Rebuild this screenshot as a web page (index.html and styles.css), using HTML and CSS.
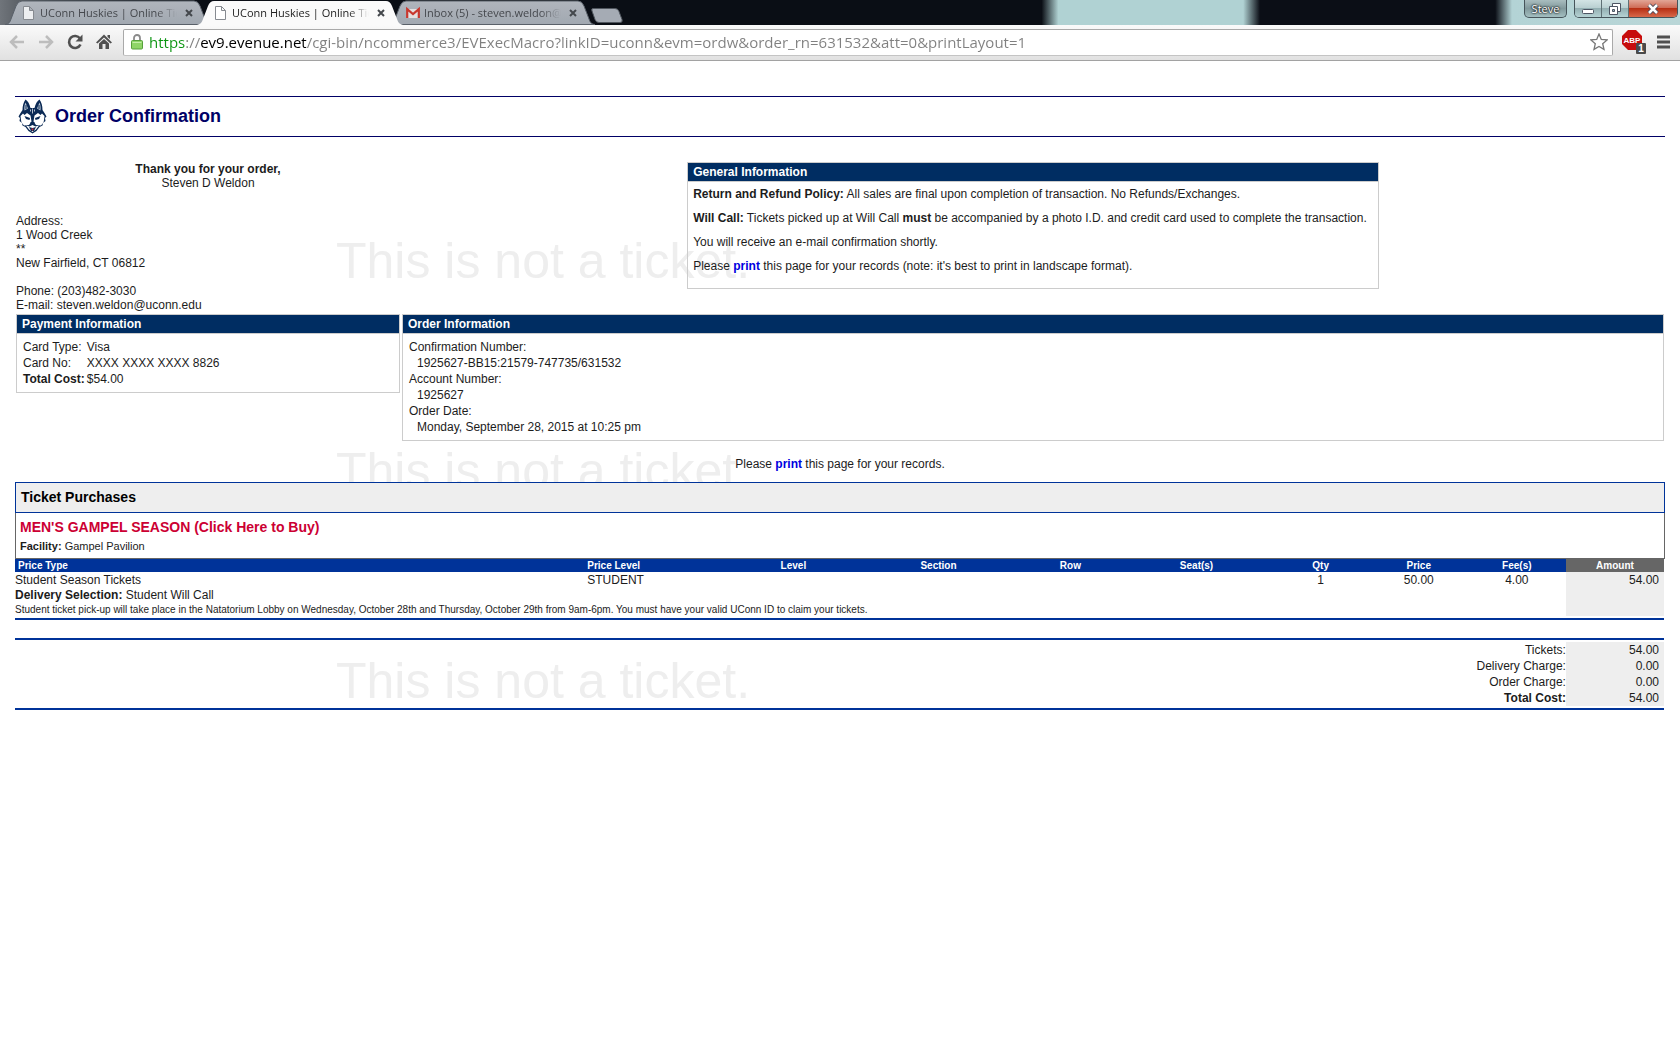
FILE: index.html
```html
<!DOCTYPE html>
<html lang="en">
<head>
<meta charset="utf-8">
<title>UConn Huskies | Online Ticket Office</title>
<link rel="stylesheet" href="styles.css">
</head>
<body>
<div class="browser">
  <div class="titlebar">
    <div class="tabs">
      <div class="tab">
        <svg class="tab-shape" viewBox="0 0 206 25" aria-hidden="true"><defs><linearGradient id="idle" x1="0" x2="0" y1="0" y2="1"><stop offset="0" stop-color="#b0b5bc"/><stop offset="1" stop-color="#a1a8b1"/></linearGradient></defs><path d="M0 24.5C4 24 5 22 6 19L11 6Q13 1 17 1H189Q193 1 195 6L200 19C201 22 202 24 206 24.5Z" fill="url(#idle)" stroke="#596069"/></svg>
        <svg class="tab-icon" viewBox="0 0 14 14" aria-hidden="true"><path d="M1.5.5h6l4 4v9h-10zM7.500.5v4h4" fill="#eceef0" stroke="#868a90"/></svg>
        <span class="tab-title">UConn Huskies | Online Ticket</span>
        <button class="tab-close" aria-label="Close tab"><svg viewBox="0 0 8 8"><path d="M1 1l6 6M7 1L1 7"/></svg></button>
      </div>
      <div class="tab tab-right">
        <svg class="tab-shape" viewBox="0 0 206 25" aria-hidden="true"><path d="M0 24.500C4 24 5 22 6 19L11 6Q13 1 17 1H189Q193 1 195 6L200 19C201 22 202 24 206 24.5Z" fill="url(#idle)" stroke="#596069"/></svg>
        <svg class="tab-icon" viewBox="0 0 14 14" aria-hidden="true"><path d="M1 3h12v9H1z" fill="#e4e0e0"/><path d="M1.200 12V3.200L7 8l5.800-4.800V12" fill="none" stroke="#c9372e" stroke-width="2.200"/></svg>
        <span class="tab-title">Inbox (5) - steven.weldon@uconn.edu</span>
        <button class="tab-close" aria-label="Close tab"><svg viewBox="0 0 8 8"><path d="M1 1l6 6M7 1L1 7"/></svg></button>
      </div>
      <div class="tab tab-active">
        <svg class="tab-shape" viewBox="0 0 206 25" aria-hidden="true"><path d="M0 25C4 24 5 22 6 19L11 6Q13 1 17 1H189Q193 1 195 6L200 19C201 22 202 24 206 25Z" fill="#fafafa"/></svg>
        <svg class="tab-icon" viewBox="0 0 14 14" aria-hidden="true"><path d="M1.500.5h6l4 4v9h-10zM7.500.5v4h4" fill="#fff" stroke="#868a90"/></svg>
        <span class="tab-title">UConn Huskies | Online Ticket</span>
        <button class="tab-close" aria-label="Close tab"><svg viewBox="0 0 8 8"><path d="M1 1l6 6M7 1L1 7"/></svg></button>
      </div>
      <button class="new-tab" aria-label="New tab"><svg viewBox="0 0 32 15"><path d="M2 .5h22q3 0 4 3l3 8q1 3-2 3H8q-3 0-4-3L1 3Q0 .5 2 .5z" fill="#a5abb4" stroke="#50565e"/></svg></button>
    </div>
    <div class="window-controls">
      <button class="profile">Steve</button>
      <div class="caption-buttons">
        <button class="caption minimize" aria-label="Minimize"><svg viewBox="0 0 14 12"><rect x="1.500" y="6.500" width="11" height="4" rx="1" fill="#fff" stroke="#4d5563"/></svg></button>
        <button class="caption restore" aria-label="Restore"><svg viewBox="0 0 14 12"><path d="M4.500.5h8v8h-8z" fill="#fff" stroke="#4d5563"/><path d="M1.500 3.500h8v8h-8z" fill="#fff" stroke="#4d5563"/><path d="M4.500 6.500h2v2h-2z" fill="#9dbcc0" stroke="#4d5563"/></svg></button>
        <button class="caption close" aria-label="Close"><svg viewBox="0 0 14 12"><path d="M3 2l8 8M11 2l-8 8" stroke="#4d4a5a" stroke-width="4.500"/><path d="M3 2l8 8M11 2l-8 8" stroke="#fff" stroke-width="2.500"/></svg></button>
      </div>
    </div>
  </div>
  <div class="toolbar">
    <button class="tool" aria-label="Back"><svg viewBox="0 0 16 16"><path d="M15 8H2M8 2L2 8l6 6" fill="none" stroke="#bdbdbd" stroke-width="2.500"/></svg></button>
    <button class="tool" aria-label="Forward"><svg viewBox="0 0 16 16"><path d="M1 8h13M8 2l6 6-6 6" fill="none" stroke="#bdbdbd" stroke-width="2.500"/></svg></button>
    <button class="tool" aria-label="Reload"><svg viewBox="0 0 16 16"><path d="M13 4.500A6 6 0 1 0 13.500 10.500" fill="none" stroke="#505050" stroke-width="2.600"/><path d="M15.500.5v7h-7z" fill="#505050"/></svg></button>
    <button class="tool" aria-label="Home"><svg viewBox="0 0 16 16"><path d="M8 .5L16 8.500l-1.500 1L8 3.500 1.500 9.500 0 8.500zM11.500 1h2.500v4l-2.500-2zM3 9.500l5-4.500 5 4.500V15H9.500v-5h-3v5H3z" fill="#505050"/></svg></button>
    <div class="omnibox">
      <svg class="lock" viewBox="0 0 12 16" aria-hidden="true"><path d="M3 7.500V4a3 3 0 0 1 6 0v3.500" fill="none" stroke="#8b8b8b" stroke-width="1.800"/><rect x=".5" y="6.500" width="11" height="8.500" rx="1" fill="#8fd568" stroke="#56a03c"/><path d="M1.500 8.500h9" stroke="#c4efa9"/></svg>
      <input class="url" type="text" aria-label="Address" value="https://ev9.evenue.net/cgi-bin/ncommerce3/EVExecMacro?linkID=uconn&amp;evm=ordw&amp;order_rn=631532&amp;att=0&amp;printLayout=1">
      <button class="star" aria-label="Bookmark this page"><svg viewBox="0 0 18 18"><path d="M9 1l2.300 5.400 5.800.5-4.400 3.800 1.300 5.700L9 13.400 4 16.400l1.300-5.700L.9 6.900l5.800-.5z" fill="#fff" stroke="#777" stroke-width="1.300"/></svg></button>
    </div>
    <button class="abp" aria-label="Adblock Plus"><svg viewBox="0 0 24 24"><path d="M6 0h8l6 6v8l-6 6H6l-6-6V6z" fill="#c70d0d"/><text x="10" y="13" text-anchor="middle" class="abp-label">ABP</text><rect x="14" y="13" width="10" height="11" rx="1" fill="#4a4a4a"/><text x="19" y="22" text-anchor="middle" class="abp-count">1</text></svg></button>
    <button class="menu" aria-label="Menu"><svg viewBox="0 0 14 14"><path d="M0 2h13M0 7h13M0 12h13" stroke="#505050" stroke-width="3"/></svg></button>
  </div>
</div>

<main class="page">
  <div class="watermark watermark-one" aria-hidden="true">This is not a ticket.</div>
  <div class="watermark watermark-two" aria-hidden="true">This is not a ticket.</div>
  <div class="watermark watermark-three" aria-hidden="true">This is not a ticket.</div>

  <header class="page-header">
    <svg class="logo" viewBox="0 0 35 35" role="img" aria-label="UConn Huskies">
      <path d="M10.500.5C13 2 14.500 5 15.500 9h4C20.500 5 22 2 24.500.5 26.500 3 27.500 7 27.500 11L29.500 14 31.500 17.500 30 19l.5 3-2.500 2-.5 2.500-3 1.500-3 4-4 2.500-4-2.500-3-4-3-1.500L7 24l-2.500-2L5 19l-1.500-1.500L5.500 14l2-3C7.500 7 8.500 3 10.500.5z" fill="#0b2a55"/>
      <path d="M10.500 3.500l2.500 6-3.500 2c-.5-3 0-6 1-8zM24.500 3.500l-2.500 6 3.500 2c.5-3 0-6-1-8z" fill="#b9c5d3"/>
      <path d="M11 6v4M24 6v4" stroke="#0b2a55"/>
      <path d="M17.500 9.500v5M15.500 10.500v2M19.500 10.500v2" stroke="#dfe5ec" stroke-width=".8"/>
      <path d="M5.500 17l2.500-2.500 1.500 1.500 2.500-2 3.500 2.500 1 6-2.500 3.500-5 .5-2.500-3L6 21z" fill="#fff"/>
      <path d="M29.500 17L27 14.500 25.500 16 23 14l-3.500 2.500-1 6L21 26l5 .5 2.500-3L29 21z" fill="#fff"/>
      <path d="M9.500 17l5.500 2-.5 2-3.500-1zM25.500 17L20 19l.5 2 3.500-1z" fill="#0b2a55"/>
      <path d="M15.500 23h4l-.5 3.500h-3z" fill="#0b2a55"/>
      <path d="M11 26.500l3.500 1 3-1.500 3 1.500 3.500-1-3 4-3.500 2.500-3.500-2.500z" fill="#fff"/>
      <path d="M14 28l3.500 1 3.500-1-2 4h-3z" fill="#0b2a55"/>
      <path d="M16.200 29.500h2.600l-1.300 2.500z" fill="#d22c3a"/>
    </svg>
    <h1>Order Confirmation</h1>
  </header>

  <div class="summary">
    <div class="customer">
      <p class="greeting"><strong>Thank you for your order,</strong><br>Steven D Weldon</p>
      <address>Address:<br>1 Wood Creek<br>**<br>New Fairfield, CT 06812<br><br>Phone: (203)482-3030<br>E-mail: steven.weldon@uconn.edu</address>
    </div>
    <section class="panel general">
      <h2>General Information</h2>
      <div class="general-body">
        <p><strong>Return and Refund Policy:</strong> All sales are final upon completion of transaction. No Refunds/Exchanges.</p>
        <p><strong>Will Call:</strong> Tickets picked up at Will Call <strong>must</strong> be accompanied by a photo I.D. and credit card used to complete the transaction.</p>
        <p>You will receive an e-mail confirmation shortly.</p>
        <p>Please <a href="#print">print</a> this page for your records (note: it's best to print in landscape format).</p>
      </div>
    </section>
    <section class="panel">
      <h2>Payment Information</h2>
      <dl class="payment">
        <dt>Card Type:</dt><dd>Visa</dd>
        <dt>Card No:</dt><dd>XXXX XXXX XXXX 8826</dd>
        <dt><strong>Total Cost:</strong></dt><dd>$54.00</dd>
      </dl>
    </section>
    <section class="panel">
      <h2>Order Information</h2>
      <dl class="order">
        <dt>Confirmation Number:</dt><dd>1925627-BB15:21579-747735/631532</dd>
        <dt>Account Number:</dt><dd>1925627</dd>
        <dt>Order Date:</dt><dd>Monday, September 28, 2015 at 10:25 pm</dd>
      </dl>
    </section>
  </div>

  <p class="print-note">Please <a href="#print">print</a> this page for your records.</p>

  <section class="purchases">
    <h2 class="purchases-title">Ticket Purchases</h2>
    <div class="event">
      <h3>MEN'S GAMPEL SEASON (Click Here to Buy)</h3>
      <p><strong>Facility:</strong> Gampel Pavilion</p>
    </div>
    <div class="ruled items">
      <table>
        <colgroup><col><col class="c-plevel"><col class="c-level"><col class="c-section"><col class="c-row"><col class="c-seat"><col class="c-num"><col class="c-num"><col class="c-num"><col class="c-num"></colgroup>
        <thead>
          <tr><th class="left first">Price Type</th><th class="left">Price Level</th><th>Level</th><th>Section</th><th>Row</th><th>Seat(s)</th><th>Qty</th><th>Price</th><th>Fee(s)</th><th class="amount-head">Amount</th></tr>
        </thead>
        <tbody>
          <tr class="item"><td class="left">Student Season Tickets</td><td class="left">STUDENT</td><td></td><td></td><td></td><td></td><td>1</td><td>50.00</td><td>4.00</td><td class="amount" rowspan="3">54.00</td></tr>
          <tr><td class="left" colspan="9"><strong>Delivery Selection:</strong> Student Will Call</td></tr>
          <tr><td class="left pickup" colspan="9">Student ticket pick-up will take place in the Natatorium Lobby on Wednesday, October 28th and Thursday, October 29th from 9am-6pm. You must have your valid UConn ID to claim your tickets.</td></tr>
        </tbody>
      </table>
    </div>
    <div class="ruled totals">
      <table>
        <colgroup><col><col class="c-num"></colgroup>
        <tbody>
          <tr><th>Tickets:</th><td class="amount">54.00</td></tr>
          <tr><th>Delivery Charge:</th><td class="amount">0.00</td></tr>
          <tr><th>Order Charge:</th><td class="amount">0.00</td></tr>
          <tr><th><strong>Total Cost:</strong></th><td class="amount">54.00</td></tr>
        </tbody>
      </table>
    </div>
  </section>
</main>
</body>
</html>
```
FILE: styles.css
```css
* { box-sizing: border-box; }

body {
  margin: 0;
  background: #fff;
  color: #1c1c1c;
  font: 12px/14px "Liberation Sans", Arial, sans-serif;
}

h1, h2, h3, p, dl, dd, address { margin: 0; font-style: normal; }
button { margin: 0; padding: 0; border: 0; background: none; }
button svg { display: block; }

/* Browser window */
.titlebar {
  display: flex;
  justify-content: space-between;
  align-items: flex-start;
  height: 25px;
  overflow: hidden;
  background: linear-gradient(90deg, #70757b 0, #3b4046 3%, #0a0e15 8%, #0a0e15 62%, #b0d2d3 63%, #b0d2d3 74%, #0b0e16 75%, #0b0e16 89%, #b3d3d5 90%, #b9d6d7 100%);
}

.tabs { display: flex; padding-left: 5px; }
.tab {
  position: relative;
  display: flex;
  align-items: center;
  flex: none;
  width: 206px;
  height: 25px;
  margin-right: -14px;
  padding: 1px 18px 0 17px;
  font: 11px/16px "Open Sans", "Noto Sans", sans-serif;
  color: #45484d;
}
.tab-right { order: 2; }
.tab-active { order: 1; z-index: 1; color: #222; }
.new-tab { order: 3; }
.tab-shape { position: absolute; inset: 0; width: 206px; height: 25px; }
.tab-icon { position: relative; flex: none; width: 14px; height: 14px; margin-right: 4px; }
.tab-title {
  position: relative;
  flex: 1;
  overflow: hidden;
  white-space: nowrap;
  mask-image: linear-gradient(90deg, #000 85%, transparent);
}
.tab-close { position: relative; width: 8px; margin: 0 0 0 8px; }
.tab-close svg { width: 8px; height: 8px; fill: none; stroke: #44484c; stroke-width: 2; }
.new-tab { margin: 6px 0 0 10px; }
.new-tab svg { width: 32px; height: 15px; }

.window-controls { display: flex; gap: 7px; padding-right: 2px; }
.profile, .caption-buttons {
  height: 18px;
  border: 1px solid #46545a;
  border-top: 0;
  border-radius: 0 0 5px 5px;
}
.profile {
  width: 43px;
  background: linear-gradient(#a9bdbf, #81999c 50%, #a3bfc0);
  color: #fff;
  font: 11px/16px "Open Sans", "Noto Sans", sans-serif;
  text-shadow: 0 0 2px #000, 0 0 2px #000;
}
.caption-buttons { display: flex; overflow: hidden; }
.caption {
  display: grid;
  place-items: center;
  width: 27px;
  background: linear-gradient(#d3e4e5, #bad0d2 45%, #93afb2 50%, #b5d2d3);
  border-right: 1px solid #5e7075;
}
.caption svg { width: 14px; height: 12px; }
.caption.close { width: 48px; border: 0; background: linear-gradient(#e2a596, #cf6c57 45%, #b72f14 50%, #d8694a); }

.toolbar {
  display: flex;
  align-items: center;
  height: 36px;
  padding: 0 9px 1px;
  border-bottom: 1px solid #a2a2a2;
  background: linear-gradient(#fafafa, #e1e1e1);
}
.tool { flex: none; margin-right: 13px; }
.tool svg { width: 16px; height: 16px; }
.tool:nth-child(4) { margin-right: 11px; }
.omnibox {
  display: flex;
  align-items: center;
  flex: 1;
  height: 27px;
  margin-right: 9px;
  padding: 0 4px 0 7px;
  border: 1px solid #a9a9a9;
  border-bottom-color: #c4c4c4;
  border-radius: 2px;
  background: #fff;
}
.lock { flex: none; width: 12px; height: 16px; margin-right: 6px; }
.url {
  flex: 1;
  min-width: 0;
  height: 24px;
  padding: 0;
  border: 0;
  outline: 0;
  font: 15px/24px "Open Sans", "Noto Sans", sans-serif;
  color: #808080;
  background: linear-gradient(90deg, #0a9410 36px, #808080 36px, #808080 51px, #000 51px, #000 158px, #808080 158px);
  background-clip: text;
  -webkit-text-fill-color: transparent;
}
.star svg { width: 18px; height: 18px; }
.abp { margin-right: 11px; }
.abp svg { width: 24px; height: 24px; }
.abp-label { font: bold 8px "Liberation Sans", Arial, sans-serif; fill: #fff; }
.abp-count { font: bold 10px "Liberation Sans", Arial, sans-serif; fill: #fff; }
.menu svg { width: 14px; height: 14px; }

/* Order page */
.page { position: relative; z-index: 0; padding: 35px 15px 0; }

.watermark {
  position: absolute;
  z-index: -1;
  left: 20%;
  color: #eee;
  font-size: 50px;
  line-height: 50px;
}
.watermark-one { top: 175px; }
.watermark-two { top: 385px; }
.watermark-three { top: 595px; }

.page-header {
  display: flex;
  align-items: center;
  gap: 5px;
  height: 41px;
  margin-bottom: 25px;
  border: solid #000066;
  border-width: 1px 0;
}
.logo { width: 35px; height: 35px; }
h1 { padding-bottom: 2px; color: #000066; font-size: 18px; line-height: 20px; }

a { color: #0000e0; font-weight: bold; text-decoration: none; }

.summary {
  display: grid;
  grid-template-columns: 23.3% 1fr;
  gap: 2px;
  align-items: start;
  margin: 0 1px;
}
.greeting { margin-bottom: 24px; text-align: center; }
.panel { border: 1px solid #ccc; }
.panel h2 {
  padding-left: 5px;
  border-bottom: 1px solid #ccc;
  background: #002d62;
  color: #fff;
  font-size: 12px;
  line-height: 18px;
}
.general { justify-self: center; min-width: 54.8%; }
.general-body { display: grid; gap: 10px; padding: 5px 5px 15px; }
.payment, .order { padding: 5px 6px; line-height: 16px; }
.payment { display: grid; grid-template-columns: auto 1fr; column-gap: 2px; }
.order dd { padding-left: 8px; }

.print-note { margin: 16px 0 11px; text-align: center; }

.purchases-title {
  padding-left: 5px;
  border: 1px solid #003399;
  background: #eee;
  color: #000;
  font-size: 14px;
  line-height: 29px;
}
.event {
  padding: 6px 4px 5px;
  border: solid #666;
  border-width: 0 1px 1px;
  background: #fff;
}
.event h3 { margin-bottom: 4px; color: #cc0033; font-size: 14px; line-height: 16px; }
.event p { font-size: 11px; }

.ruled { margin-right: 1px; border-bottom: 2px solid #003399; padding-bottom: 2px; }
.totals { margin-top: 18px; padding-top: 2px; border-top: 2px solid #003399; }

table { width: 100%; border-spacing: 0; table-layout: fixed; }
th, td { padding: 0; vertical-align: top; text-align: center; }
.c-plevel { width: 8.6%; }
.c-level { width: 7.8%; }
.c-section { width: 9.8%; }
.c-row { width: 6.2%; }
.c-seat { width: 9.1%; }
.c-num { width: 5.95%; }
thead th { background: #003399; color: #fff; font-size: 10px; line-height: 13px; }
th.left, td.left { text-align: left; }
th.first { padding-left: 3px; }
thead .amount-head { background: #666; }
.items td { line-height: 15px; }
.item td { padding-top: 1px; }
.items .pickup { font-size: 10px; line-height: 13px; }
td.amount { padding-right: 5px; background: #eee; text-align: right; }
.totals th, .totals td { text-align: right; font-weight: normal; line-height: 16px; }
```
